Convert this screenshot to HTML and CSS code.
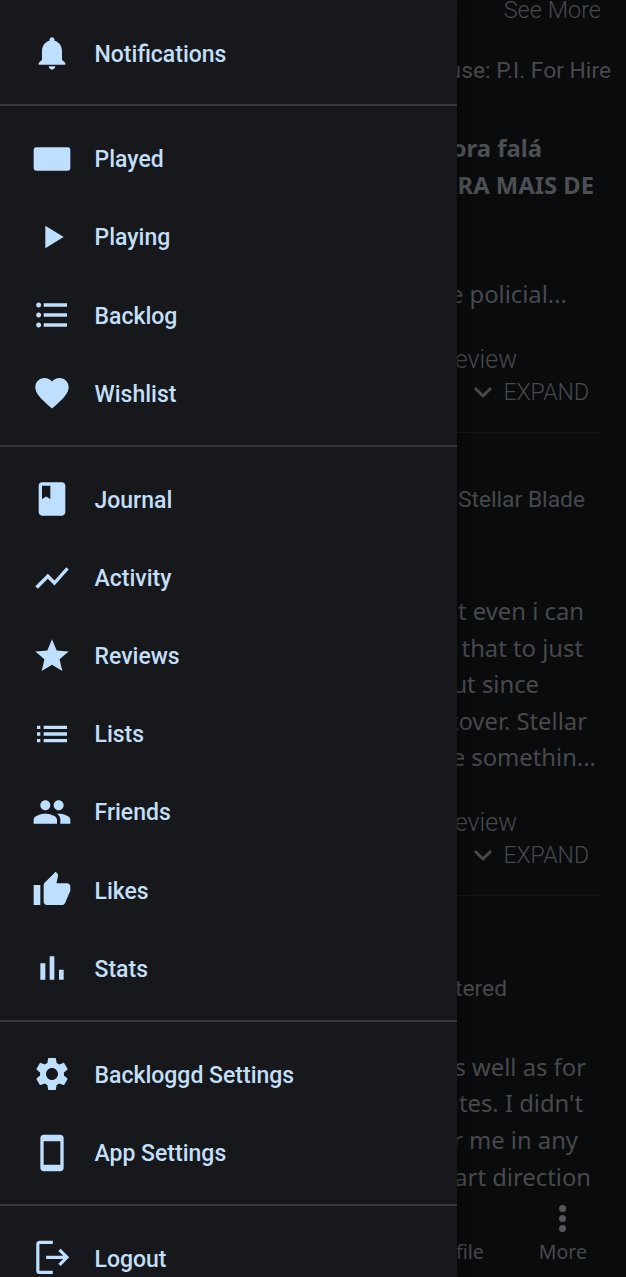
FILE: index.html
```html
<!DOCTYPE html>
<html lang="en">
<head>
    <meta charset="UTF-8">
    <meta name="viewport" content="width=device-width, initial-scale=1.0">
    <title>Backloggd</title>
    <link rel="stylesheet" href="styles.css">
</head>
<body>
    <div class="page">
        <main class="feed">
            <div class="line-small see-more">See More</div>
            <div class="line game-title game-one">House: P.I. For Hire</div>
            <div class="line review-head head-one">agora falá</div>
            <div class="line review-head head-two">PARA MAIS DE</div>
            <div class="line excerpt policial">de policial...</div>
            <div class="line-small read-review">review</div>
            <div class="line-small expand"><svg class="chevron" viewBox="0 0 24 24"><path d="M4 8l8 8 8-8" /></svg>EXPAND</div>
            <div class="rule"></div>

            <div class="line game-title game-two">Stellar Blade</div>
            <div class="line excerpt even">but even i can</div>
            <div class="line excerpt that">is that to just</div>
            <div class="line excerpt since">but since</div>
            <div class="line excerpt leftover">leftover. Stellar</div>
            <div class="line excerpt something">like somethin...</div>
            <div class="line-small read-review second">review</div>
            <div class="line-small expand"><svg class="chevron" viewBox="0 0 24 24"><path d="M4 8l8 8 8-8" /></svg>EXPAND</div>
            <div class="rule"></div>

            <div class="line game-title game-three">Mastered</div>
            <div class="line excerpt well">as well as for</div>
            <div class="line excerpt sites">sites. I didn't</div>
            <div class="line excerpt me">for me in any</div>
            <div class="line excerpt direction">art direction</div>

            <nav class="tabs">
                <div class="tab tab-profile">Profile</div>
                <div class="tab tab-more">
                    <span class="dots"><i></i><i></i><i></i></span>
                    More
                </div>
            </nav>
        </main>

        <aside class="drawer">
            <section class="group group-top">
                <a class="item">
                    <svg class="icon" viewBox="0 0 24 24"><path d="M12 22c1.1 0 2-.9 2-2h-4c0 1.1.89 2 2 2zm6-6v-5c0-3.07-1.64-5.64-4.5-6.32V4c0-.83-.67-1.5-1.5-1.5s-1.5.67-1.5 1.5v.68C7.63 5.36 6 7.92 6 11v5l-2 2v1h16v-1l-2-2z" /></svg>
                    <span>Notifications</span>
                </a>
            </section>
            <section class="group">
                <a class="item">
                    <svg class="icon" viewBox="0 0 24 24"><rect x="1" y="5" width="22" height="14" rx="1.6" /></svg>
                    <span>Played</span>
                </a>
                <a class="item">
                    <svg class="icon" viewBox="0 0 24 24"><path d="M8 5.3v13.4L19 12z" /></svg>
                    <span>Playing</span>
                </a>
                <a class="item">
                    <svg class="icon" viewBox="0 0 24 24"><path d="M4 10.5c-.83 0-1.5.67-1.5 1.5s.67 1.5 1.5 1.5 1.5-.67 1.5-1.5-.67-1.5-1.5-1.5zm0-6c-.83 0-1.5.67-1.5 1.5S3.17 7.5 4 7.5 5.5 6.83 5.5 6 4.83 4.5 4 4.5zm0 12c-.83 0-1.5.68-1.5 1.5s.68 1.5 1.5 1.5 1.5-.68 1.5-1.5-.67-1.5-1.5-1.5zM7 19h14v-2H7v2zm0-6h14v-2H7v2zm0-8v2h14V5H7z" /></svg>
                    <span>Backlog</span>
                </a>
                <a class="item">
                    <svg class="icon" viewBox="0 0 24 24"><path d="M12 21.35l-1.45-1.32C5.4 15.36 2 12.28 2 8.5 2 5.42 4.42 3 7.5 3c1.74 0 3.41.81 4.5 2.09C13.09 3.81 14.76 3 16.5 3 19.58 3 22 5.42 22 8.5c0 3.78-3.4 6.86-8.55 11.54L12 21.35z" /></svg>
                    <span>Wishlist</span>
                </a>
            </section>
            <section class="group">
                <a class="item">
                    <svg class="icon" viewBox="0 0 24 24"><path d="M18 2H6c-1.1 0-2 .9-2 2v16c0 1.1.9 2 2 2h12c1.1 0 2-.9 2-2V4c0-1.1-.9-2-2-2zM6 4h5v8l-2.5-1.5L6 12V4z" /></svg>
                    <span>Journal</span>
                </a>
                <a class="item">
                    <svg class="icon" viewBox="0 0 24 24"><path d="M3.5 18.49l6-6.01 4 4L22 6.92l-1.41-1.41-7.09 7.97-4-4L2 16.99z" /></svg>
                    <span>Activity</span>
                </a>
                <a class="item">
                    <svg class="icon" viewBox="0 0 24 24"><path d="M12 17.27L18.18 21l-1.64-7.03L22 9.24l-7.19-.61L12 2 9.19 8.63 2 9.24l5.46 4.73L5.82 21z" /></svg>
                    <span>Reviews</span>
                </a>
                <a class="item">
                    <svg class="icon" viewBox="0 0 24 24"><path d="M3 13h2v-2H3v2zm0 4h2v-2H3v2zm0-8h2V7H3v2zm4 4h14v-2H7v2zm0 4h14v-2H7v2zM7 7v2h14V7H7z" /></svg>
                    <span>Lists</span>
                </a>
                <a class="item">
                    <svg class="icon" viewBox="0 0 24 24"><path d="M16 11c1.66 0 2.99-1.34 2.99-3S17.66 5 16 5c-1.66 0-3 1.34-3 3s1.34 3 3 3zm-8 0c1.66 0 2.99-1.34 2.99-3S9.66 5 8 5C6.34 5 5 6.34 5 8s1.34 3 3 3zm0 2c-2.33 0-7 1.17-7 3.5V19h14v-2.5c0-2.33-4.67-3.5-7-3.5zm8 0c-.29 0-.62.02-.97.05 1.16.84 1.97 1.97 1.97 3.45V19h6v-2.5c0-2.33-4.67-3.5-7-3.5z" /></svg>
                    <span>Friends</span>
                </a>
                <a class="item">
                    <svg class="icon" viewBox="0 0 24 24"><path d="M1 21h4V9H1v12zm22-11c0-1.1-.9-2-2-2h-6.31l.95-4.57.03-.32c0-.41-.17-.79-.44-1.06L14.17 1 7.59 7.59C7.22 7.95 7 8.45 7 9v10c0 1.1.9 2 2 2h9c.83 0 1.54-.5 1.84-1.22l3.02-7.05c.09-.23.14-.47.14-.73v-2z" /></svg>
                    <span>Likes</span>
                </a>
                <a class="item">
                    <svg class="icon" viewBox="0 0 24 24"><path d="M5 9.2h3V19H5zM10.6 5h2.8v14h-2.8zm5.6 8H19v6h-2.8z" /></svg>
                    <span>Stats</span>
                </a>
            </section>
            <section class="group">
                <a class="item">
                    <svg class="icon" viewBox="0 0 24 24"><path d="M19.14 12.94c.04-.3.06-.61.06-.94 0-.32-.02-.64-.07-.94l2.03-1.58c.18-.14.23-.41.12-.61l-1.92-3.32c-.12-.22-.37-.29-.59-.22l-2.39.96c-.5-.38-1.03-.7-1.62-.94l-.36-2.54c-.04-.24-.24-.41-.48-.41h-3.84c-.24 0-.43.17-.47.41l-.36 2.54c-.59.24-1.13.57-1.62.94l-2.39-.96c-.22-.08-.47 0-.59.22L2.74 8.87c-.12.21-.08.47.12.61l2.03 1.58c-.05.3-.09.63-.09.94s.02.64.07.94l-2.03 1.58c-.18.14-.23.41-.12.61l1.92 3.32c.12.22.37.29.59.22l2.39-.96c.5.38 1.03.7 1.62.94l.36 2.54c.05.24.24.41.48.41h3.84c.24 0 .44-.17.47-.41l.36-2.54c.59-.24 1.13-.56 1.62-.94l2.39.96c.22.08.47 0 .59-.22l1.92-3.32c.12-.22.07-.47-.12-.61l-2.01-1.58zM12 15.6c-1.98 0-3.6-1.62-3.6-3.6s1.62-3.6 3.6-3.6 3.6 1.62 3.6 3.6-1.62 3.6-3.6 3.6z" /></svg>
                    <span>Backloggd Settings</span>
                </a>
                <a class="item">
                    <svg class="icon" viewBox="0 0 24 24"><path d="M17 1.01L7 1c-1.1 0-2 .9-2 2v18c0 1.1.9 2 2 2h10c1.1 0 2-.9 2-2V3c0-1.1-.9-1.99-2-1.99zM17 19H7V5h10v14z" /></svg>
                    <span>App Settings</span>
                </a>
            </section>
            <section class="group group-end">
                <a class="item">
                    <svg class="icon icon-line" viewBox="0 0 24 24"><path d="M12.5 2H4.500a1 1 0 0 0-1 1v16a1 1 0 0 0 1 1h8" /><path d="M8.500 11H21M16.500 6.500L21 11l-4.500 4.500" /></svg>
                    <span>Logout</span>
                </a>
            </section>
        </aside>
    </div>
</body>
</html>
```

FILE: styles.css
```css
* {
    box-sizing: border-box;
}
html, body {
    margin: 0;
    background-color: #0a0b0d;
}
.page {
    position: relative;
    width: 626px;
    height: 1277px;
    overflow: hidden;
}

.feed {
    display: flex;
    flex-direction: column;
    height: 100%;
    white-space: nowrap;
    text-align: right;
    color: #47494d;
    font-family: "Noto Sans", sans-serif;
    font-size: 23.8px;
}
.line {
    height: 36.6px;
    line-height: 36.6px;
}
.line-small {
    height: 33px;
    line-height: 33px;
    font-family: "Roboto", sans-serif;
    font-weight: 300;
    font-size: 23px;
}
.see-more { margin-top: -6px; padding-right: 25px; font-size: 23.5px; }
.game-title { font-family: "Roboto", sans-serif; font-size: 22.8px; }
.game-one { margin-top: 26px; padding-right: 15px; }
.game-two { margin-top: 48.7px; padding-right: 41px; }
.game-three { margin-top: 74.7px; padding-right: 119px; }
.review-head { font-weight: 700; color: #4c4f54; }
.head-one { margin-top: 40.4px; padding-right: 84px; }
.head-two { padding-right: 32px; }
.policial { margin-top: 72.8px; padding-right: 59px; }
.read-review { margin-top: 30.2px; padding-right: 109px; font-size: 25px; }
.read-review.second { margin-top: 29.8px; }
.expand {
    display: flex;
    justify-content: flex-end;
    align-items: center;
    gap: 8px;
    padding-right: 37px;
}
.chevron {
    width: 24px;
    height: 24px;
    fill: none;
    stroke: #47494d;
    stroke-width: 3;
}
.rule {
    height: 1px;
    margin-top: 23.5px;
    margin-right: 26px;
    background-color: #141519;
}
.even { margin-top: 74.4px; padding-right: 42px; }
.that { padding-right: 43px; }
.since { padding-right: 87px; }
.leftover { padding-right: 39px; }
.something { padding-right: 30px; }
.well { margin-top: 41.4px; padding-right: 40px; }
.sites { padding-right: 43px; }
.me { padding-right: 48px; }
.direction { padding-right: 35px; }

.tabs {
    display: flex;
    justify-content: flex-end;
    align-items: flex-end;
    margin-top: auto;
    height: 77px;
    padding-bottom: 10px;
    font-size: 19.5px;
    line-height: 30px;
}
.tab-profile { margin-right: 55px; }
.tab-more {
    display: flex;
    flex-direction: column;
    align-items: center;
    margin-right: 39px;
    gap: 5px;
}
.dots {
    display: flex;
    flex-direction: column;
    gap: 3px;
}
.dots i {
    display: block;
    width: 7px;
    height: 7px;
    border-radius: 50%;
    background-color: #55575b;
}

/* drawer */
.drawer {
    position: absolute;
    top: 0;
    left: 0;
    bottom: 0;
    width: 457px;
    background-color: #16181c;
    box-shadow: 0 0 12px rgba(0, 0, 0, 0.4);
    font-family: "Roboto", sans-serif;
    font-weight: 500;
    font-size: 23px;
    color: #c3dff7;
}
.group {
    padding: 13.5px 0 12.5px;
    border-bottom: 2px solid #36383c;
}
.group-top { padding: 14px 0 12px; }
.group-end { border-bottom: none; }
.item {
    display: flex;
    align-items: center;
    height: 78.17px;
    padding-left: 32px;
    gap: 22.5px;
}
.item span {
    padding-top: 2px;
}
.icon {
    flex: none;
    width: 40px;
    height: 40px;
    fill: #bfdfff;
}
.icon-line {
    fill: none;
    stroke: #bfdfff;
    stroke-width: 1.9;
}
```
